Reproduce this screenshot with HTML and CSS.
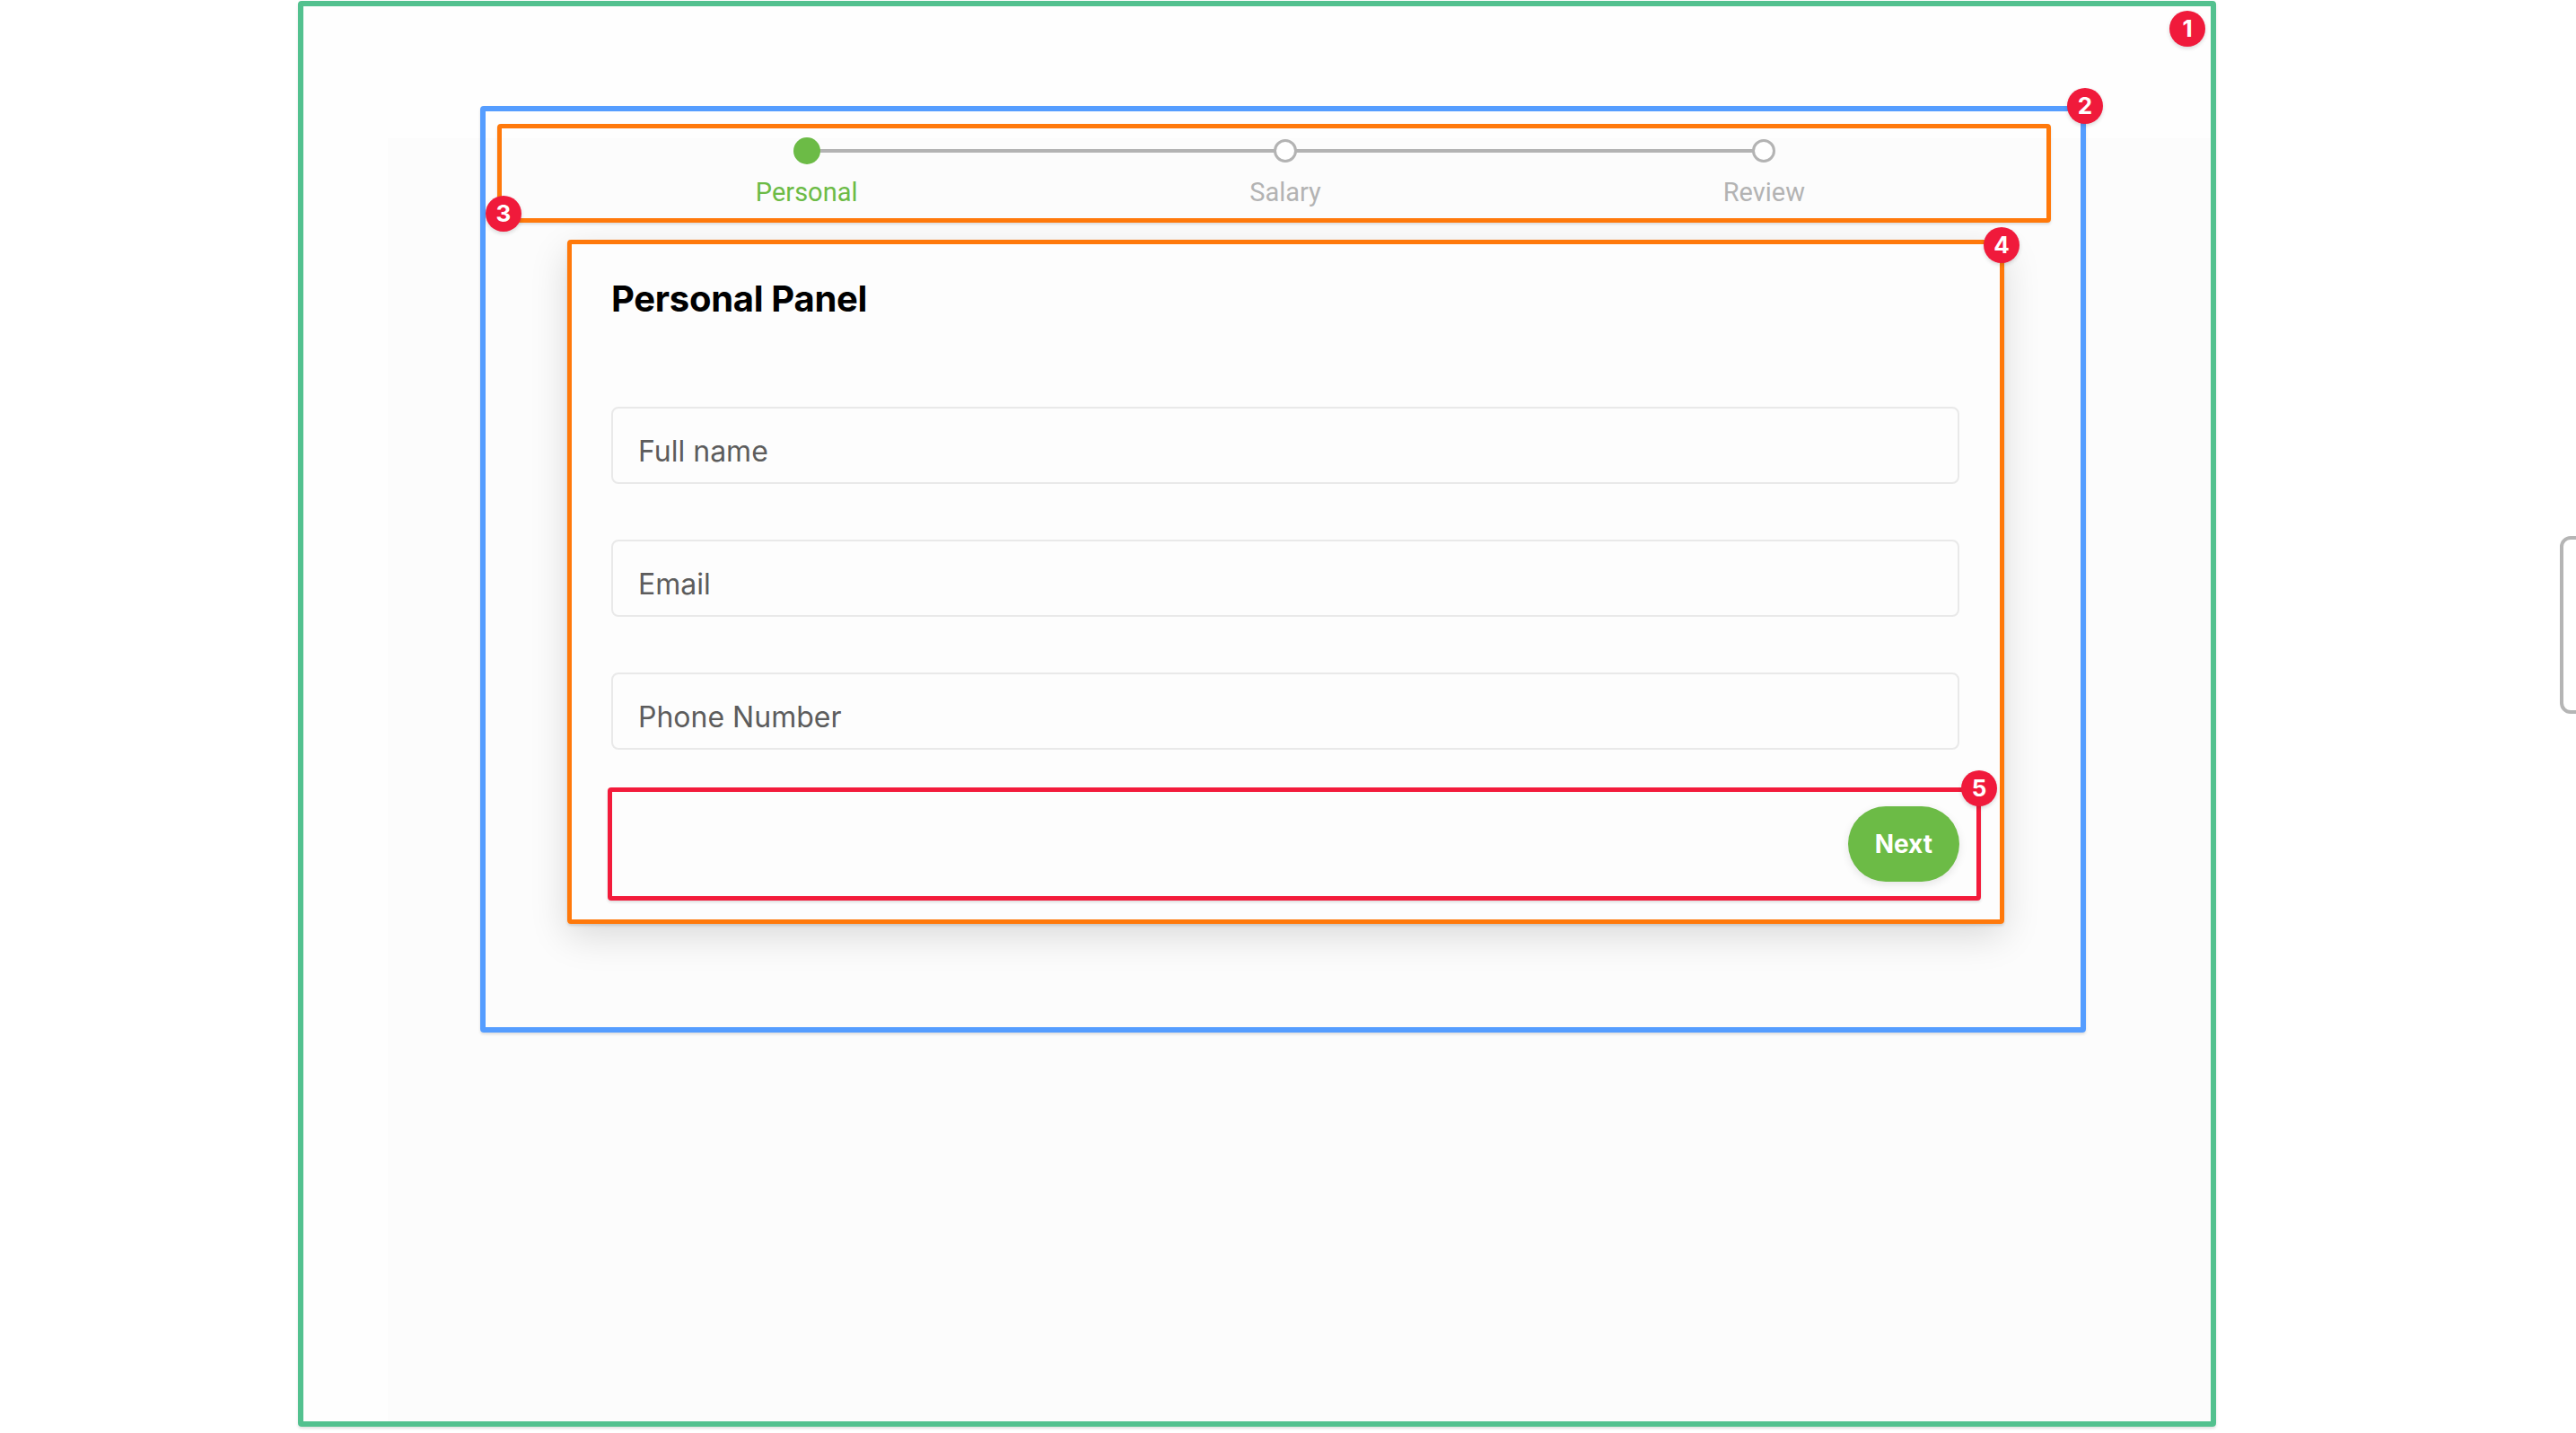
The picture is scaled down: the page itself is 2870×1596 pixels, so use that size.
FILE: index.html
```html
<!DOCTYPE html>
<html lang="en">
<head>
<meta charset="utf-8">
<title>Wizard</title>
<link rel="stylesheet" href="styles.css">
</head>
<body>
  <div class="page">
    <div class="wizard">
      <div class="stepper">
        <div class="stepper-line"></div>
        <div class="step step-active">
          <span class="dot dot-filled"></span>
          <span class="step-label">Personal</span>
        </div>
        <div class="step">
          <span class="dot dot-outline"></span>
          <span class="step-label">Salary</span>
        </div>
        <div class="step">
          <span class="dot dot-outline"></span>
          <span class="step-label">Review</span>
        </div>
      </div>

      <div class="card">
        <h2 class="card-title">Personal Panel</h2>
        <form class="form">
          <input class="field" type="text" placeholder="Full name">
          <input class="field" type="email" placeholder="Email">
          <input class="field" type="tel" placeholder="Phone Number">
        </form>
        <div class="actions">
          <button class="btn-next" type="button">Next</button>
        </div>
      </div>
    </div>
  </div>

  <div class="side-handle"></div>

  <div class="ann ann-1"></div>
  <div class="ann ann-2"></div>
  <div class="ann ann-3"></div>
  <div class="ann ann-4"></div>
  <div class="ann ann-5"></div>
  <span class="badge badge-1">1</span>
  <span class="badge badge-2">2</span>
  <span class="badge badge-3">3</span>
  <span class="badge badge-4">4</span>
  <span class="badge badge-5">5</span>
</body>
</html>
```

FILE: styles.css
```css
html, body {
  margin: 0;
  padding: 0;
}

body {
  position: relative;
  width: 2870px;
  height: 1596px;
  overflow: hidden;
  background: #ffffff;
  font-family: Inter, "Liberation Sans", sans-serif;
}

.page {
  margin-left: 332px;
  padding-top: 118px;
  padding-left: 203px;
  width: 2137px;
  height: 1588px;
  box-sizing: border-box;
  background:
    linear-gradient(#fcfcfc, #fcfcfc) 100px 154px / 2037px 100% no-repeat,
    #fefefe;
}

.wizard {
  width: 1789px;
  height: 1032px;
  box-sizing: border-box;
  padding: 35px 0 0 97px;
}

/* Stepper */
.stepper {
  position: relative;
  width: 1600px;
  display: grid;
  grid-template-columns: repeat(3, 1fr);
}

.stepper-line {
  position: absolute;
  left: 16.6667%;
  right: 16.6667%;
  top: 13px;
  height: 4px;
  background: #b3b3b3;
}

.step {
  position: relative;
  z-index: 1;
  display: flex;
  flex-direction: column;
  align-items: center;
}

.dot {
  display: block;
  border-radius: 50%;
  box-sizing: border-box;
}

.dot-filled {
  width: 30px;
  height: 30px;
  background: #6cbb46;
}

.dot-outline {
  width: 26px;
  height: 26px;
  margin: 2px 0;
  border: 3px solid #b3b3b3;
  background: #ffffff;
}

.step-label {
  margin-top: 14px;
  font-family: Roboto, "Liberation Sans", sans-serif;
  font-size: 29px;
  line-height: 34px;
  color: #b3b3b3;
}

.step-active .step-label {
  color: #6cbb46;
}

/* Card */
.card {
  width: 1600px;
  margin-top: 37px;
  box-sizing: border-box;
  padding: 41px 49px 28px;
  background: #fdfdfd;
  box-shadow: 0 14px 40px rgba(0, 0, 0, 0.14);
}

.card-title {
  margin: 0;
  font-size: 40px;
  line-height: 48px;
  font-weight: 700;
  letter-spacing: -0.3px;
  color: #000000;
}

.form {
  margin: 96px 0 0;
  display: flex;
  flex-direction: column;
  gap: 62px;
}

.field {
  display: block;
  width: 100%;
  height: 86px;
  box-sizing: border-box;
  margin: 0;
  padding: 12px 28px 0;
  border: 2px solid #e9e9e9;
  border-radius: 8px;
  background: #fdfdfd;
  font-family: Inter, "Liberation Sans", sans-serif;
  font-size: 32px;
  color: #333333;
  outline: none;
}

.field::placeholder {
  color: #5c5c5c;
}

.actions {
  margin-top: 45px;
  height: 120px;
  display: flex;
  align-items: center;
  justify-content: flex-end;
}

.btn-next {
  height: 84px;
  padding: 0 30px;
  border: none;
  border-radius: 42px;
  background: #6cbb46;
  color: #ffffff;
  font-family: Inter, "Liberation Sans", sans-serif;
  font-size: 28px;
  font-weight: 700;
  box-shadow: 0 3px 10px rgba(0, 0, 0, 0.1);
  cursor: pointer;
}

/* Partially off-screen handle at the right edge */
.side-handle {
  position: absolute;
  left: 2852px;
  top: 597px;
  width: 40px;
  height: 198px;
  box-sizing: border-box;
  border: 4px solid #b5b5b5;
  border-radius: 12px;
}

/* Annotation overlay */
.ann {
  position: absolute;
  box-sizing: border-box;
  border: 5px solid;
  border-radius: 4px;
  box-shadow: 0 2px 3px rgba(0, 0, 0, 0.12);
  pointer-events: none;
}

.ann-1 { left: 332px; top: 1px;   width: 2137px; height: 1588px; border-color: #53c18f; border-width: 6px; }
.ann-2 { left: 535px; top: 118px; width: 1789px; height: 1032px; border-color: #559dff; border-width: 6px; }
.ann-3 { left: 554px; top: 138px; width: 1731px; height: 110px;  border-color: #ff790b; }
.ann-4 { left: 632px; top: 267px; width: 1601px; height: 762px;  border-color: #ff790b; }
.ann-5 { left: 677px; top: 877px; width: 1530px; height: 126px;  border-color: #f31b3b; }

.badge {
  position: absolute;
  width: 40px;
  height: 40px;
  margin: -20px 0 0 -20px;
  border-radius: 50%;
  background: #f01a3b;
  color: #ffffff;
  font-family: Inter, "Liberation Sans", sans-serif;
  font-size: 26px;
  font-weight: 700;
  line-height: 40px;
  text-align: center;
  box-shadow: 0 2px 4px rgba(0, 0, 0, 0.15);
}

.badge-1 { left: 2437px; top: 32px; }
.badge-2 { left: 2323px; top: 118px; }
.badge-3 { left: 561px;  top: 238px; }
.badge-4 { left: 2230px; top: 273px; }
.badge-5 { left: 2205px; top: 878px; }
```
